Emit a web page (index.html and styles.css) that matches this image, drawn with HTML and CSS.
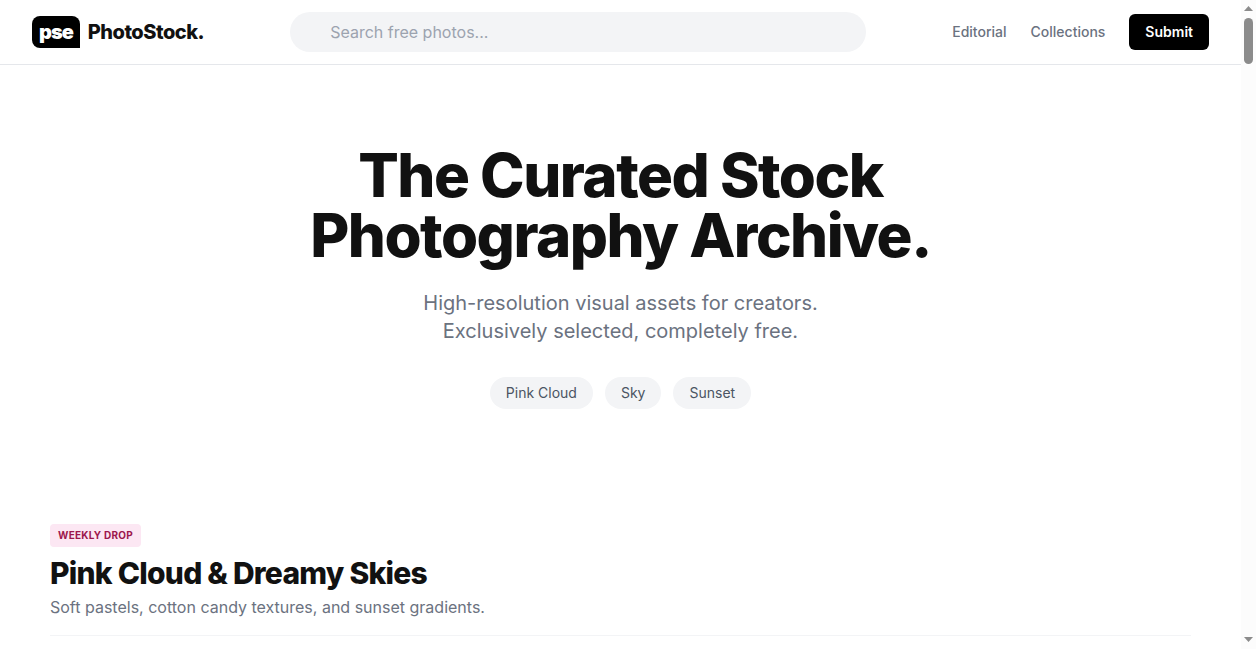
FILE: index.html
```html
<!DOCTYPE html>
<html lang="en">
<head>
<meta charset="utf-8">
<meta name="viewport" content="width=device-width, initial-scale=1">
<title>PhotoStock.</title>
<link rel="stylesheet" href="styles.css">
</head>
<body>
<div class="window">
  <div class="page">
    <header class="site-header">
      <a class="brand" href="#"><span class="brand-mark">pse</span><span class="brand-name">PhotoStock.</span></a>
      <input class="search" type="search" placeholder="Search free photos..." aria-label="Search free photos">
      <nav class="nav">
        <a class="nav-link" href="#">Editorial</a>
        <a class="nav-link" href="#">Collections</a>
        <button class="submit" type="button">Submit</button>
      </nav>
    </header>
    <main>
      <section class="hero">
        <h1 class="hero-title">The Curated Stock<br>Photography Archive.</h1>
        <p class="hero-text">High-resolution visual assets for creators.<br>Exclusively selected, completely free.</p>
        <div class="tags">
          <a class="tag" href="#">Pink Cloud</a>
          <a class="tag" href="#">Sky</a>
          <a class="tag" href="#">Sunset</a>
        </div>
      </section>
      <section class="collection">
        <span class="badge">WEEKLY DROP</span>
        <h2 class="collection-title">Pink Cloud &amp; Dreamy Skies</h2>
        <p class="collection-text">Soft pastels, cotton candy textures, and sunset gradients.</p>
      </section>
    </main>
  </div>
  <div class="scrollbar" aria-hidden="true">
    <svg class="arrow" viewBox="0 0 15 18"><path d="M3 11L7.500 6L12 11Z"/></svg>
    <div class="thumb"></div>
    <svg class="arrow arrow-down" viewBox="0 0 15 18"><path d="M3 6L7.500 11L12 6Z"/></svg>
  </div>
</div>
</body>
</html>
```
FILE: styles.css
```css
* { box-sizing: border-box; }
body { margin: 0; background: #fff; color: #111; font-family: Inter, "Liberation Sans", sans-serif; }
a { color: inherit; text-decoration: none; }
h1, h2, p { margin: 0; }

.window { display: flex; height: 100vh; overflow: hidden; }
.page { flex: 1; min-width: 0; }

.site-header { display: flex; align-items: center; justify-content: space-between; padding: 12px 32px; border-bottom: 1px solid #e5e7eb; }
.brand { display: flex; align-items: center; gap: 8px; font-size: 20px; line-height: 32px; font-weight: 800; letter-spacing: -0.025em; }
.brand-mark { padding: 0 7px; background: #000; color: #fff; border-radius: 8px 8px 0 8px; font-weight: 900; letter-spacing: -0.05em; }
.search { width: 576px; height: 40px; padding: 0 40px; border: 0; border-radius: 20px; background: #f3f4f6; font: 400 16px Inter, "Liberation Sans", sans-serif; color: #111; }
.search::placeholder { color: #9ca3af; opacity: 1; }
.nav { display: flex; align-items: center; gap: 24px; font-size: 14px; line-height: 20px; font-weight: 500; color: #6b7280; }
.submit { padding: 8px 16px; border: 0; border-radius: 6px; background: #000; color: #fff; font: 600 14px/20px Inter, "Liberation Sans", sans-serif; }

.hero { display: flex; flex-direction: column; align-items: center; padding: 80px 24px 64px; text-align: center; }
.hero-title { font-size: 60px; line-height: 60px; font-weight: 800; letter-spacing: -0.025em; }
.hero-text { margin-top: 24px; font-size: 20px; line-height: 28px; color: #6b7280; }
.tags { display: flex; gap: 12px; margin-top: 32px; }
.tag { padding: 6px 16px; border-radius: 16px; background: #f3f4f6; color: #4b5563; font-size: 14px; line-height: 20px; }

.collection { margin: 0 50px; padding: 50px 0 16px; border-bottom: 1px solid #f3f4f6; }
.badge { display: inline-block; padding: 4px 8px; border-radius: 4px; background: #fce7f3; color: #9d174d; font-size: 10px; line-height: 15px; font-weight: 700; letter-spacing: 0.025em; }
.collection-title { margin-top: 8px; font-size: 30px; line-height: 36px; font-weight: 800; letter-spacing: -0.025em; }
.collection-text { margin-top: 4px; font-size: 16px; line-height: 24px; color: #6b7280; }

.scrollbar { display: flex; flex-direction: column; width: 15px; background: #fcfcfc; }
.arrow { width: 15px; height: 18px; fill: #8b8b8b; }
.arrow-down { margin-top: auto; }
.thumb { width: 9px; height: 46px; margin: 0 3px; border-radius: 5px; background: #8b8b8b; }
```
